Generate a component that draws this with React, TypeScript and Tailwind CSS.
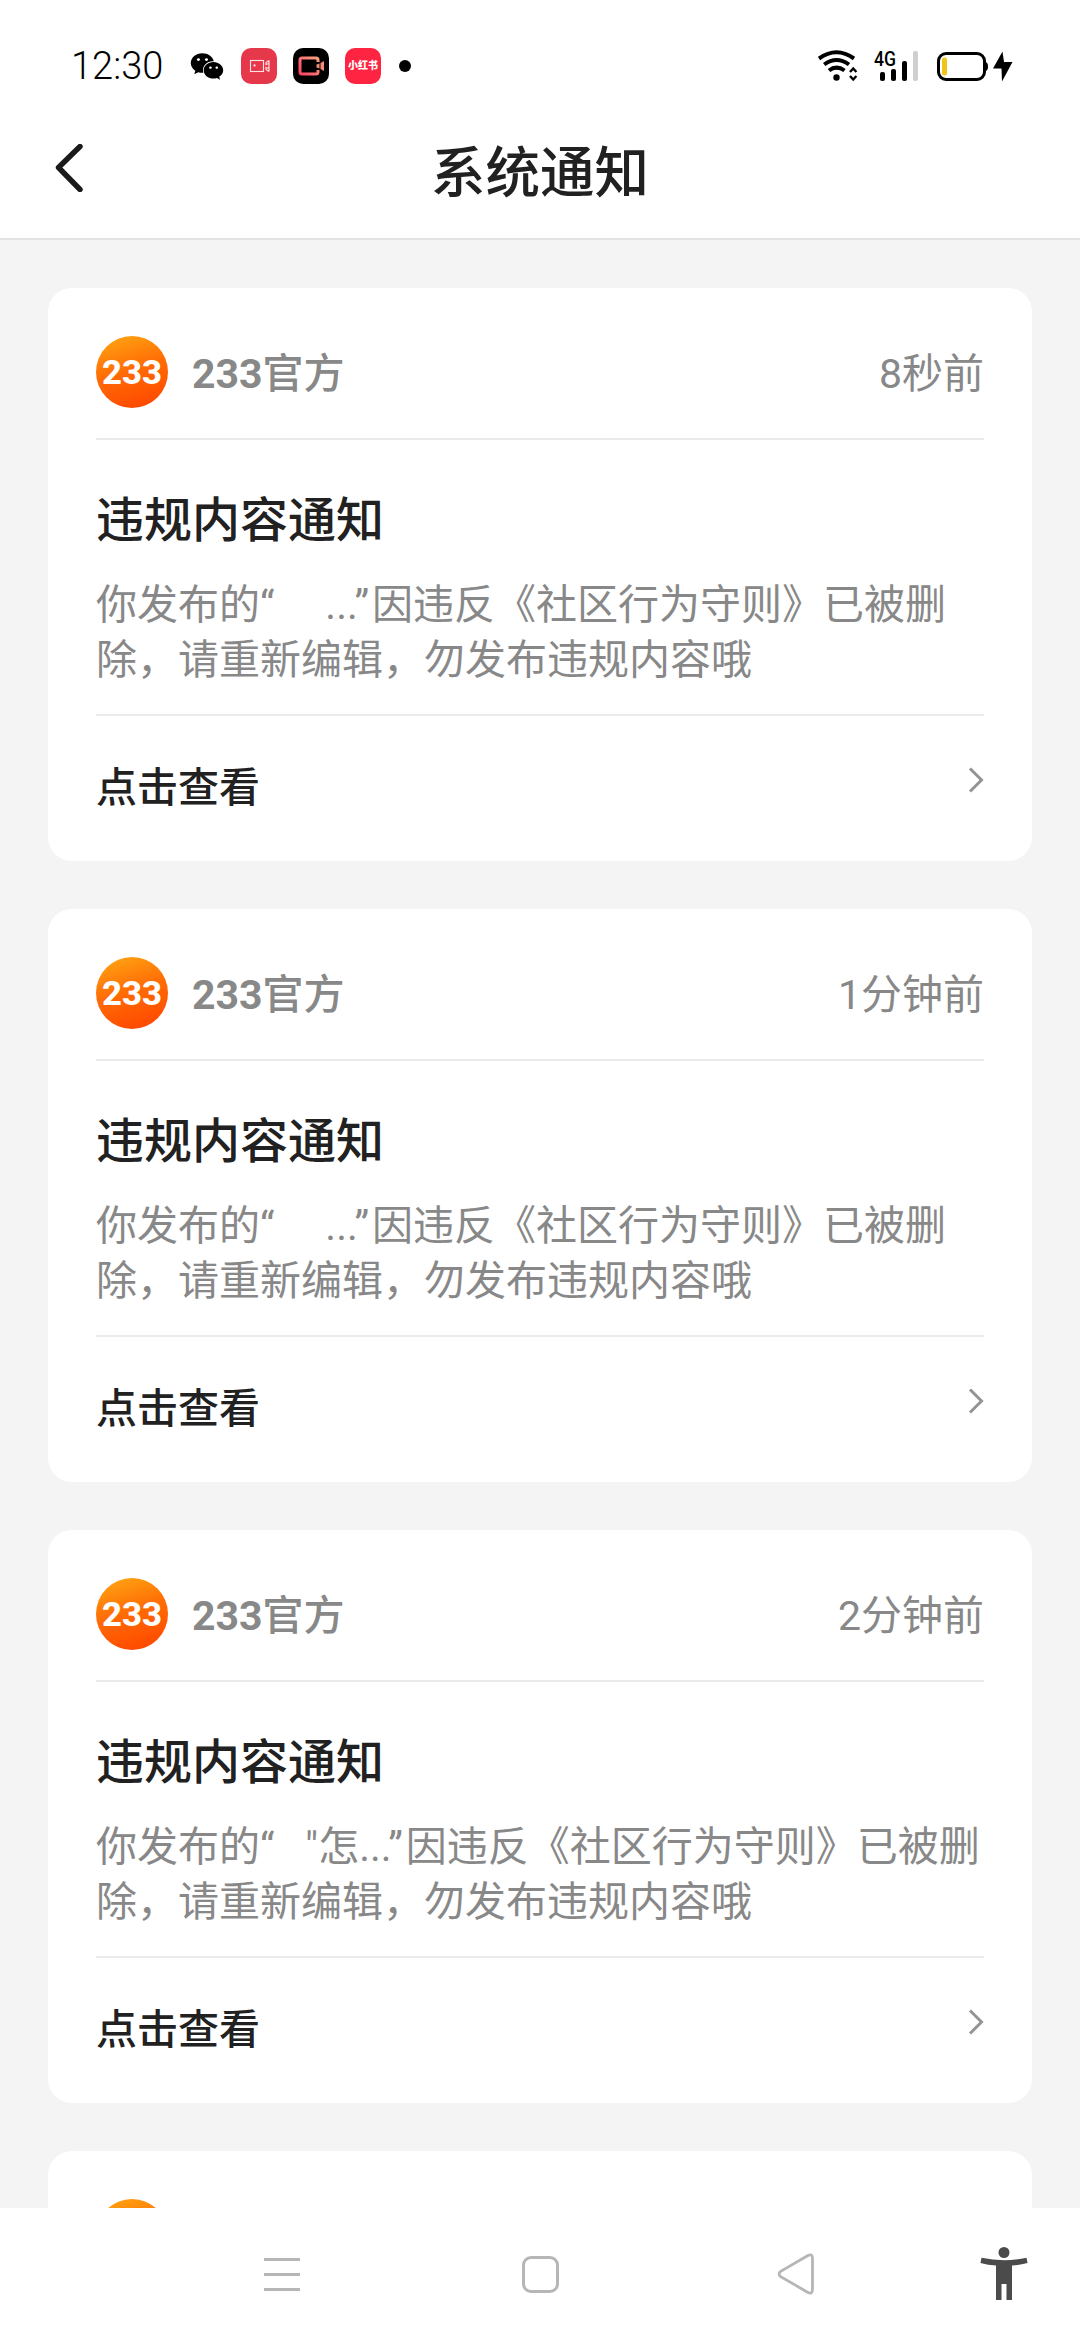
import * as React from 'react'
import { FaWeixin } from 'react-icons/fa'

interface Notice {
  id: number
  time: string
  quote: string
}

const notices: Notice[] = [
  { id: 1, time: '8秒前', quote: '     ...' },
  { id: 2, time: '1分钟前', quote: '     ...' },
  { id: 3, time: '2分钟前', quote: '   "怎...' },
  { id: 4, time: '3分钟前', quote: '     ...' },
]

function StatusBar() {
  return (
    <div className="flex h-[132px] items-center justify-between pl-[71px] pr-[67px] text-black">
      <div className="flex items-center">
        <span className="w-[119px] text-[38px] leading-[48px] font-light">12:30</span>
        <FaWeixin className="h-[33px] w-[34px]" />

        {/* APP ICONS */}
        <div className="ml-[17px] flex gap-4">
          <div className="size-9 rounded-[10px] bg-[#e5384a]">
            <svg viewBox="0 0 36 36" className="size-9" fill="none" stroke="#ffe3e6" strokeWidth="1.1">
              <rect x="9.5" y="12.5" width="13" height="11" />
              <path d="M28 12.5l-3 2v2l3-1M28 23.5l-3-2v-2l3 1M28 12.5v11" />
              <circle cx="13.5" cy="17.5" r=".6" fill="#ffe3e6" />
            </svg>
          </div>
          <div className="size-9 rounded-[10px] bg-black">
            <svg viewBox="0 0 36 36" className="size-9" fill="none">
              <defs>
                <linearGradient id="cam" x1="0" y1="1" x2="1" y2="0">
                  <stop offset="0" stopColor="#ff4266" />
                  <stop offset="1" stopColor="#f9a27e" />
                </linearGradient>
              </defs>
              <path
                d="M25 14v-2q0-2-2-2H9q-2 0-2 2v12q0 2 2 2h14q2 0 2-2v-2"
                stroke="url(#cam)"
                strokeWidth="3"
              />
              <path d="M23.5 16.5l3-1v5l-3-1zM27.5 15l3.500-2v10l-3.500-2z" fill="#f58c78" />
            </svg>
          </div>
          <div className="flex size-9 items-center justify-center rounded-[10px] bg-[#ff2442] text-[10px] leading-4 font-black text-white">
            小红书
          </div>
        </div>
        <div className="ml-[18px] size-3 rounded-full bg-black" />
      </div>

      <div className="flex items-center">
        {/* WIFI */}
        <svg viewBox="0 0 40 32" className="h-8 w-10" fill="none" stroke="black" strokeWidth="4">
          <path d="M1 8.500Q18.500-4 36 8.500M6.200 14.500Q18.500 5.500 31 14.500M11 20.500Q18.500 14.700 26.500 20.500" />
          <circle cx="18.500" cy="27.500" r="3.200" fill="black" stroke="none" />
          <path d="M32 22l3.200-3.500 3.200 3.500M32 26l3.200 3.500 3.200-3.500" strokeWidth="2.400" />
        </svg>
        {/* SIGNAL */}
        <svg viewBox="0 0 46 32" className="ml-[15px] h-8 w-[46px]">
          <text x="1" y="16" fontSize="20" fontWeight="500" textLength="22" lengthAdjust="spacingAndGlyphs">
            4G
          </text>
          <rect x="7" y="22" width="5" height="9" rx="2" />
          <rect x="18" y="19" width="5" height="12" rx="2" />
          <rect x="29" y="11" width="5" height="20" rx="2" />
          <rect x="40" y="1" width="5" height="30" rx="2" fill="#cfcfcf" />
        </svg>
        {/* BATTERY */}
        <svg viewBox="0 0 76 32" className="ml-[18px] h-8 w-[76px]">
          <rect x="1.500" y="3.500" width="46" height="26" rx="7.500" fill="none" stroke="black" strokeWidth="3" />
          <path d="M48 12q3 0 3 4.500t-3 4.500z" />
          <rect x="5" y="7.500" width="5" height="18" rx="2" fill="#f0c419" />
          <path d="M65.500 1.500L56 18.500h8.500L65 31.500 75.500 12H67z" />
        </svg>
      </div>
    </div>
  )
}

function Header() {
  return (
    <header className="grid h-[108px] grid-cols-[1fr_auto_1fr] border-b-2 border-[#e3e3e3]">
      <button className="flex pt-3 pl-[55px]">
        <svg
          viewBox="0 0 28 48"
          className="h-12 w-7"
          fill="none"
          stroke="#1a1a1a"
          strokeWidth="5.400"
          strokeLinecap="round"
          strokeLinejoin="round"
        >
          <path d="M25 2.500L3.500 23.500 25 45.500" />
        </svg>
      </button>
      <h1 className="h-20 text-[54.5px] leading-[82px] font-medium">系统通知</h1>
    </header>
  )
}

function Avatar() {
  return (
    <svg viewBox="0 0 72 72" className="size-[72px]">
      <defs>
        <linearGradient id="avatar" x1=".2" y1="0" x2=".5" y2="1">
          <stop offset="0" stopColor="#ffa412" />
          <stop offset=".5" stopColor="#ff6c05" />
          <stop offset="1" stopColor="#ff4b00" />
        </linearGradient>
      </defs>
      <circle cx="36" cy="36" r="36" fill="url(#avatar)" />
      <text
        x="6"
        y="47.500"
        fontSize="33"
        fontWeight="800"
        fill="white"
        textLength="60"
        lengthAdjust="spacingAndGlyphs"
      >
        233
      </text>
    </svg>
  )
}

function NoticeCard({ notice }: { notice: Notice }) {
  return (
    <article className="h-[573px] shrink-0 rounded-[24px] bg-white px-12">
      <div className="flex h-[152px] border-b-2 border-[#ebebeb] pt-12">
        <Avatar />
        <span className="ml-6 text-[41px] leading-[76px] font-medium text-[#888]">
          <b className="font-bold">233</b>官方
        </span>
        <span className="ml-auto text-[41px] leading-[76px] text-[#888]">{notice.time}</span>
      </div>

      <div className="h-[276px] border-b-2 border-[#ebebeb] pt-[49px]">
        <h2 className="text-[48px] leading-[64px] font-medium">违规内容通知</h2>
        <p className="mt-[25px] text-[41px] leading-[55px] whitespace-pre-wrap text-[#888]">
          你发布的“{notice.quote}
          <span className="mr-[3px]">”</span>因违反《社区行为守则》已被删除，请重新编辑，勿发布违规内容哦
        </p>
      </div>

      <div className="flex justify-between">
        <span className="pt-[42px] text-[41px] leading-[60px] font-medium">点击查看</span>
        <svg viewBox="0 0 16 26" className="mt-[51px] h-[26px] w-4" fill="none" stroke="#949494" strokeWidth="3">
          <path d="M2 1.500L13.500 13 2 24.500" />
        </svg>
      </div>
    </article>
  )
}

function NavBar() {
  return (
    <nav className="flex h-[132px] items-center bg-white pl-[264px] text-[#b6b6b6]">
      <div className="flex w-9 flex-col gap-3">
        <div className="h-[3px] bg-[#b6b6b6]" />
        <div className="h-[3px] bg-[#b6b6b6]" />
        <div className="h-[3px] bg-[#b6b6b6]" />
      </div>
      <div className="ml-[222px] size-[37px] rounded-[9px] border-3 border-[#b6b6b6]" />
      <svg
        viewBox="0 0 38 42"
        className="ml-[218px] h-[42px] w-[38px]"
        fill="none"
        stroke="currentColor"
        strokeWidth="2.800"
      >
        <path d="M30.500 2.800Q35.500 0 35.500 5.500v31q0 5.500-5 2.700L3.700 23.600Q.5 21 3.700 18.400z" />
      </svg>
      {/* ACCESSIBILITY */}
      <svg viewBox="0 0 48 54" className="ml-[165px] h-[54px] w-12" fill="#4b4b4b">
        <circle cx="24" cy="5.500" r="5.500" />
        <path d="M1.500 10.800Q24 15.500 46.500 10.800L47.500 16Q40 18 32 18.500V53H26.500V37H21.500V53H16V18.500Q8 18 .5 16z" />
      </svg>
    </nav>
  )
}

export default function App() {
  return (
    <div
      lang="zh-CN"
      className="flex h-[2340px] w-[1080px] flex-col overflow-hidden bg-white font-[Roboto,'Noto_Sans_CJK_SC',sans-serif] text-[#212121]"
    >
      <StatusBar />
      <Header />
      <main className="flex min-h-0 flex-1 flex-col gap-12 overflow-hidden bg-[#f4f4f4] px-12 pt-12">
        {notices.map((notice) => (
          <NoticeCard key={notice.id} notice={notice} />
        ))}
      </main>
      <NavBar />
    </div>
  )
}
